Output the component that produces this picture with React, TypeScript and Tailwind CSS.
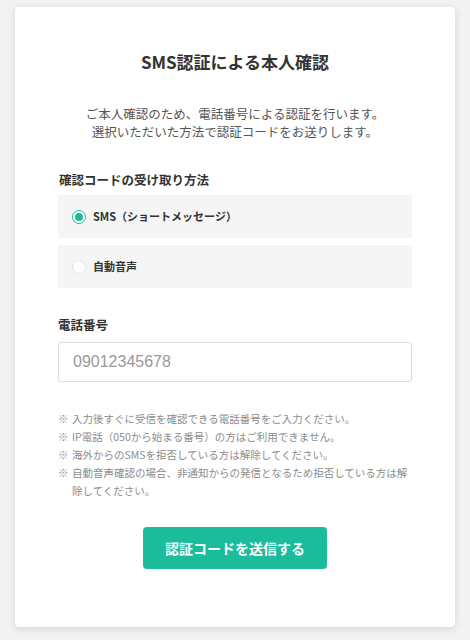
import React, { useState } from "react";

const notes = [
	"入力後すぐに受信を確認できる電話番号をご入力ください。",
	"IP電話（050から始まる番号）の方はご利用できません。",
	"海外からのSMSを拒否している方は解除してください。",
	"自動音声確認の場合、非通知からの発信となるため拒否している方は解除してください。",
];

const App = () => {
	const [method, setMethod] = useState<string>("sms");
	const [phone, setPhone] = useState<string>("");

	return (
		<div
			className="min-h-[640px] bg-[#f2f2f2] px-[15px] pt-[7px] pb-[13px]"
			style={{ fontFamily: '"Noto Sans CJK JP", "Noto Sans", sans-serif' }}
		>
			<div className="bg-white rounded-[4px] shadow-[0_2px_8px_rgba(0,0,0,0.12)] px-[43px] pt-[43px] pb-[58px]">
				{/*Title && Description*/}
				<h1 className="text-center text-[17px] leading-[24px] font-bold text-[#333]">
					SMS認証による本人確認
				</h1>
				<p className="mt-[31px] text-center text-[12.5px] leading-[18px] text-[#555]">
					ご本人確認のため、電話番号による認証を行います。
					<br />
					選択いただいた方法で認証コードをお送りします。
				</p>

				{/*Receive Method*/}
				<div className="mt-[30px]">
					<label className="block text-[12.5px] leading-[18px] font-bold text-[#333] pl-[1px]">
						確認コードの受け取り方法
					</label>
					<div className="mt-[6px] flex flex-col gap-[7px]">
						{[
							{ value: "sms", label: "SMS（ショートメッセージ）" },
							{ value: "voice", label: "自動音声" },
						].map((opt) => (
							<label
								key={opt.value}
								onClick={() => setMethod(opt.value)}
								className="flex items-center h-[43px] bg-[#f5f5f5] pl-[14px] cursor-pointer"
							>
								{method === opt.value ? (
									<span className="w-[14px] h-[14px] rounded-full border-[1.5px] border-[#1abc9c] flex items-center justify-center bg-white">
										<span className="w-[8px] h-[8px] rounded-full bg-[#1abc9c]" />
									</span>
								) : (
									<span className="w-[14px] h-[14px] rounded-full border border-[#e4e4e4] bg-white" />
								)}
								<span className="ml-[7px] text-[11px] font-bold text-[#333]">
									{opt.label}
								</span>
							</label>
						))}
					</div>
				</div>

				{/*Phone Number*/}
				<div className="mt-[28px]">
					<label className="block text-[12.5px] leading-[18px] font-bold text-[#333]">
						電話番号
					</label>
					<input
						type="tel"
						value={phone}
						onChange={(e) => setPhone(e.target.value)}
						placeholder="09012345678"
						className="mt-[8px] w-full h-[40px] border border-[#dcdcdc] rounded-[3px] px-[14px] text-[16px] text-[#333] placeholder:text-[#999] outline-none"
						style={{ fontFamily: '"Liberation Sans", Arial, sans-serif' }}
					/>
				</div>

				{/*Notes*/}
				<ul className="mt-[28px] text-[10.5px] leading-[18px] text-[#8c8c8c]">
					{notes.map((note) => (
						<li key={note} className="flex">
							<span className="w-[14px] shrink-0">※</span>
							<span>{note}</span>
						</li>
					))}
				</ul>

				{/*Submit*/}
				<div className="mt-[27px] flex justify-center">
					<button className="w-[184px] h-[42px] rounded-[4px] bg-[#1abc9c] text-white text-[14px] font-bold">
						認証コードを送信する
					</button>
				</div>
			</div>
		</div>
	);
};

export default App;
